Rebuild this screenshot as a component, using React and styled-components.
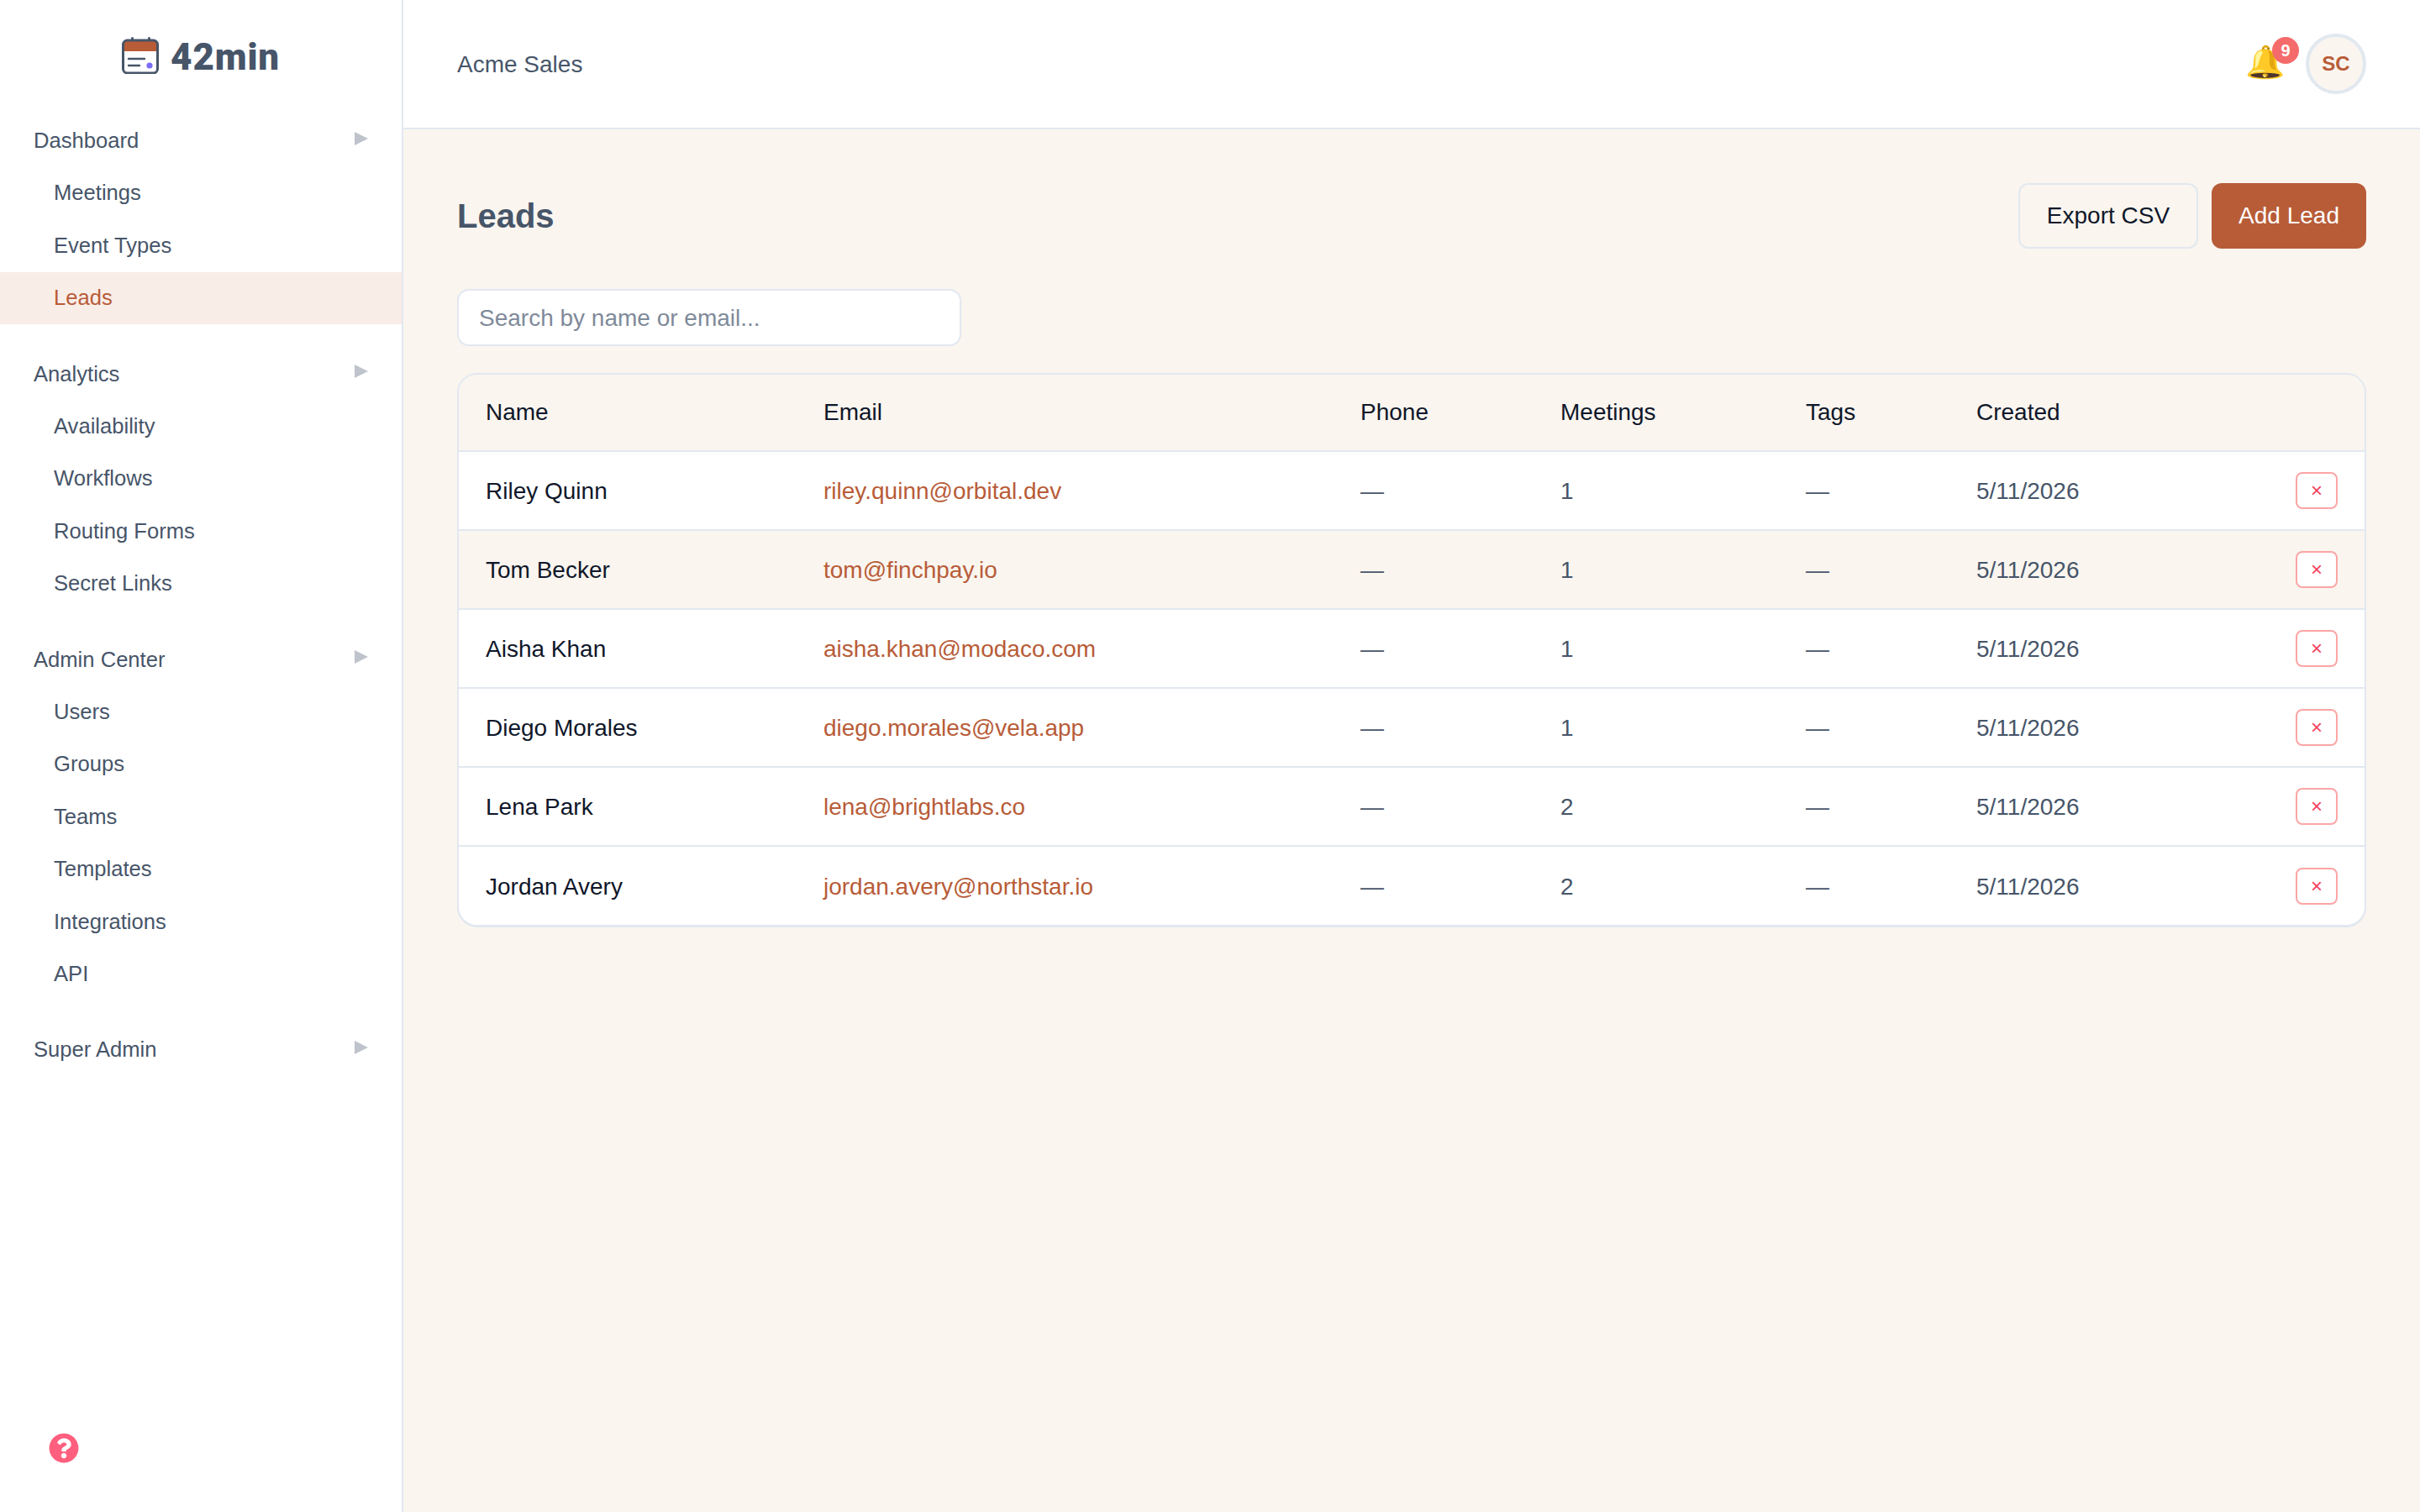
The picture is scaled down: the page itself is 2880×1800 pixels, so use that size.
import styled, { createGlobalStyle } from "styled-components";
import { FaQuestionCircle } from "react-icons/fa";

const GlobalStyle = createGlobalStyle`
  html, body { margin: 0; padding: 0; height: 100%; }
  body { font-family: "Liberation Sans", Arial, sans-serif; background: #faf5ef; }
  #root { height: 100%; }
  * { box-sizing: border-box; }
`;

const accent = "#b85c38";
const line = "#e2e8f0";
const slate = "#475569";
const ink = "#0f172a";
const cream = "#faf5ef";

const navSections = [
  { title: "Dashboard", items: ["Meetings", "Event Types", "Leads"] },
  { title: "Analytics", items: ["Availability", "Workflows", "Routing Forms", "Secret Links"] },
  { title: "Admin Center", items: ["Users", "Groups", "Teams", "Templates", "Integrations", "API"] },
  { title: "Super Admin", items: [] },
];

const leads = [
  { name: "Riley Quinn", email: "riley.quinn@orbital.dev", meetings: 1 },
  { name: "Tom Becker", email: "tom@finchpay.io", meetings: 1, striped: true },
  { name: "Aisha Khan", email: "aisha.khan@modaco.com", meetings: 1 },
  { name: "Diego Morales", email: "diego.morales@vela.app", meetings: 1 },
  { name: "Lena Park", email: "lena@brightlabs.co", meetings: 2 },
  { name: "Jordan Avery", email: "jordan.avery@northstar.io", meetings: 2 },
];

const Shell = styled.div`
  display: flex;
  height: 1800px;
`;

const Sidebar = styled.aside`
  width: 480px;
  flex-shrink: 0;
  display: flex;
  flex-direction: column;
  background: #fff;
  border-right: 2px solid ${line};
`;

const Logo = styled.div`
  height: 136.4px;
  display: flex;
  align-items: center;
  justify-content: center;
  gap: 14px;
  padding-bottom: 4px;
`;

const LogoText = styled.span`
  font-family: Roboto, sans-serif;
  font-weight: 900;
  font-size: 44px;
  letter-spacing: 0.8px;
  color: ${slate};
  padding-top: 3px;
`;

const NavSection = styled.div`
  margin-bottom: 28px;
`;

const SectionHead = styled.div`
  height: 62.4px;
  display: flex;
  align-items: center;
  justify-content: space-between;
  padding: 0 40px;
  font-size: 25.6px;
  color: ${slate};
`;

const Caret = styled.span`
  width: 0;
  height: 0;
  margin-top: -6px;
  border-left: 16px solid #bfc3cb;
  border-top: 8px solid transparent;
  border-bottom: 8px solid transparent;
`;

const NavItem = styled.div`
  height: 62.4px;
  display: flex;
  align-items: center;
  padding-left: 64px;
  font-size: 25.6px;
  color: ${(p) => (p.$active ? accent : slate)};
  background: ${(p) => (p.$active ? "#f9ede8" : "transparent")};
`;

const HelpButton = styled.div`
  margin-top: auto;
  padding: 0 0 58px 58px;
  display: flex;
  color: #ff5f7e;
  font-size: 36px;
`;

const Main = styled.div`
  flex: 1;
  display: flex;
  flex-direction: column;
  min-width: 0;
`;

const Header = styled.header`
  height: 154px;
  display: flex;
  align-items: center;
  justify-content: space-between;
  padding: 0 64px;
  background: #fff;
  border-bottom: 2px solid ${line};
`;

const OrgName = styled.span`
  font-size: 28px;
  color: ${slate};
  padding-top: 2px;
`;

const HeaderRight = styled.div`
  display: flex;
  align-items: center;
  gap: 8px;
`;

const BellWrap = styled.div`
  position: relative;
  width: 64px;
  height: 72px;
  padding-bottom: 4px;
  display: flex;
  align-items: center;
  font-size: 38px;
  line-height: 1;
`;

const Badge = styled.span`
  position: absolute;
  top: 4px;
  right: 0;
  width: 32px;
  height: 32px;
  border-radius: 50%;
  background: #f56b6b;
  color: #fff;
  font-size: 20px;
  font-weight: 700;
  display: flex;
  align-items: center;
  justify-content: center;
`;

const Avatar = styled.div`
  width: 72px;
  height: 72px;
  border-radius: 50%;
  background: ${cream};
  border: 4px solid ${line};
  color: ${accent};
  font-size: 24px;
  font-weight: 700;
  display: flex;
  align-items: center;
  justify-content: center;
`;

const Content = styled.main`
  padding: 64px 64px 0;
`;

const TitleRow = styled.div`
  display: flex;
  align-items: center;
  justify-content: space-between;
  margin-bottom: 48px;
`;

const Title = styled.h1`
  margin: 0;
  font-size: 40px;
  font-weight: 700;
  color: ${slate};
`;

const Actions = styled.div`
  display: flex;
  gap: 16px;
`;

const Button = styled.button`
  height: 78px;
  padding: 0 32px;
  border-radius: 12px;
  font-family: inherit;
  font-size: 28px;
  border: ${(p) => (p.$primary ? "none" : `2px solid ${line}`)};
  background: ${(p) => (p.$primary ? accent : "transparent")};
  color: ${(p) => (p.$primary ? "#fff" : ink)};
`;

const Search = styled.input`
  display: block;
  width: 600px;
  height: 68px;
  padding: 2px 24px 0;
  margin-bottom: 32px;
  background: #fff;
  border: 2px solid ${line};
  border-radius: 14px;
  font-family: inherit;
  font-size: 28px;
  &::placeholder { color: #7f8a9a; opacity: 1; }
`;

const TableCard = styled.div`
  border: 2px solid ${line};
  border-radius: 24px;
  overflow: hidden;
  background: #fff;
  box-shadow: 0 1px 0 ${line};
`;

const Table = styled.table`
  width: 100%;
  border-collapse: collapse;
  table-layout: fixed;
  font-size: 28px;
`;

const HeadRow = styled.tr`
  height: 91px;
  background: ${cream};
  border-bottom: 2px solid ${line};
`;

const Th = styled.th`
  padding: 0 32px;
  font-weight: 400;
  text-align: left;
  color: ${ink};
`;

const Row = styled.tr`
  height: 94px;
  background: ${(p) => (p.$striped ? cream : "#fff")};
  border-bottom: 2px solid ${line};
  &:last-child { border-bottom: none; }
`;

const Td = styled.td`
  padding: 2px 32px 0;
  color: ${(p) => p.$color || slate};
`;

const ActionCell = styled.td`
  padding: 0 32px;
  text-align: right;
`;

const DeleteButton = styled.button`
  width: 50px;
  height: 44px;
  padding: 0;
  background: #fff;
  border: 2px solid #fca5a5;
  border-radius: 8px;
  color: #f43f5e;
  font-family: inherit;
  font-size: 24px;
  vertical-align: middle;
`;

function LogoMark() {
  return (
    <svg width="44" height="44" viewBox="0 0 44 44" fill="none">
      <rect x="11" y="0" width="3" height="6" rx="1.5" fill={slate} />
      <rect x="31" y="0" width="3" height="6" rx="1.5" fill={slate} />
      <path d="M2 17V8a5 5 0 0 1 5-5h30a5 5 0 0 1 5 5v9z" fill={accent} />
      <rect x="1.5" y="4" width="41" height="39" rx="5" stroke={slate} strokeWidth="3" />
      <path d="M8 26h19M8 34h13" stroke={slate} strokeWidth="2.4" strokeLinecap="round" />
      <circle cx="33" cy="34" r="3.6" fill="#7c6cf8" />
    </svg>
  );
}

export default function App() {
  return (
    <>
      <GlobalStyle />
      <Shell>
        <Sidebar>
          <Logo>
            <LogoMark />
            <LogoText>42min</LogoText>
          </Logo>
          {navSections.map((section) => (
            <NavSection key={section.title}>
              <SectionHead>
                {section.title}
                <Caret />
              </SectionHead>
              {section.items.map((item) => (
                <NavItem key={item} $active={item === "Leads"}>{item}</NavItem>
              ))}
            </NavSection>
          ))}
          <HelpButton>
            <FaQuestionCircle />
          </HelpButton>
        </Sidebar>
        <Main>
          <Header>
            <OrgName>Acme Sales</OrgName>
            <HeaderRight>
              <BellWrap>
                🔔
                <Badge>9</Badge>
              </BellWrap>
              <Avatar>SC</Avatar>
            </HeaderRight>
          </Header>
          <Content>
            <TitleRow>
              <Title>Leads</Title>
              <Actions>
                <Button>Export CSV</Button>
                <Button $primary>Add Lead</Button>
              </Actions>
            </TitleRow>
            <Search placeholder="Search by name or email..." />
            <TableCard>
              <Table>
                <colgroup>
                  <col style={{ width: 402 }} />
                  <col style={{ width: 639 }} />
                  <col style={{ width: 238 }} />
                  <col style={{ width: 292 }} />
                  <col style={{ width: 203 }} />
                  <col style={{ width: 300 }} />
                  <col />
                </colgroup>
                <thead>
                  <HeadRow>
                    <Th>Name</Th>
                    <Th>Email</Th>
                    <Th>Phone</Th>
                    <Th>Meetings</Th>
                    <Th>Tags</Th>
                    <Th>Created</Th>
                    <Th />
                  </HeadRow>
                </thead>
                <tbody>
                  {leads.map((lead) => (
                    <Row key={lead.email} $striped={lead.striped}>
                      <Td $color={ink}>{lead.name}</Td>
                      <Td $color={accent}>{lead.email}</Td>
                      <Td>—</Td>
                      <Td>{lead.meetings}</Td>
                      <Td>—</Td>
                      <Td>5/11/2026</Td>
                      <ActionCell>
                        <DeleteButton>×</DeleteButton>
                      </ActionCell>
                    </Row>
                  ))}
                </tbody>
              </Table>
            </TableCard>
          </Content>
        </Main>
      </Shell>
    </>
  );
}
